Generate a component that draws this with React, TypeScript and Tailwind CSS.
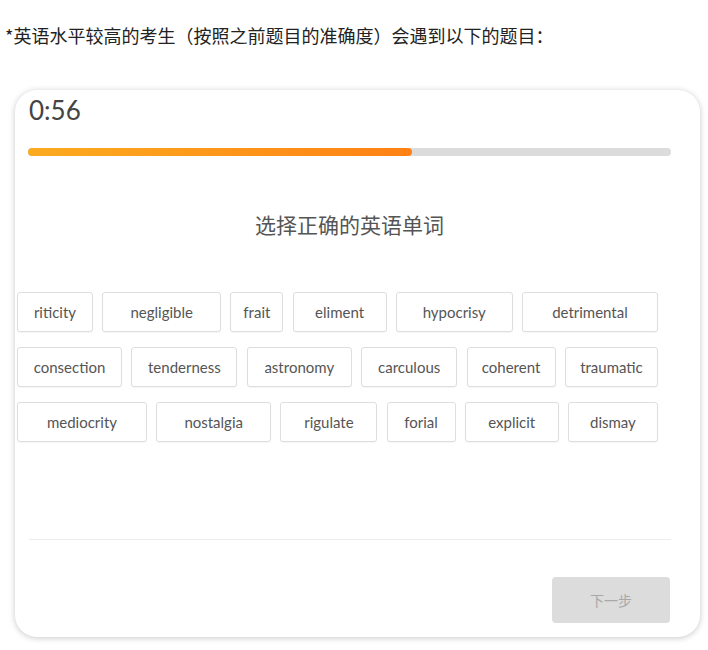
const rows: { word: string; w: string }[][] = [
  [
    { word: "riticity", w: "w-[76px]" },
    { word: "negligible", w: "w-[119px]" },
    { word: "frait", w: "w-[53px]" },
    { word: "eliment", w: "w-[94px]" },
    { word: "hypocrisy", w: "w-[117px]" },
    { word: "detrimental", w: "w-[136px]" },
  ],
  [
    { word: "consection", w: "w-[105px]" },
    { word: "tenderness", w: "w-[106px]" },
    { word: "astronomy", w: "w-[105px]" },
    { word: "carculous", w: "w-[96px]" },
    { word: "coherent", w: "w-[89px]" },
    { word: "traumatic", w: "w-[93px]" },
  ],
  [
    { word: "mediocrity", w: "w-[130px]" },
    { word: "nostalgia", w: "w-[115px]" },
    { word: "rigulate", w: "w-[97px]" },
    { word: "forial", w: "w-[69px]" },
    { word: "explicit", w: "w-[94px]" },
    { word: "dismay", w: "w-[90px]" },
  ],
]

function WordTag({ word, w }: { word: string; w: string }) {
  return (
    <button
      className={`${w} h-[40px] flex items-center justify-center rounded-[3px] border border-[#dedede] bg-white text-[15px] text-[#555] shadow-[0_1px_1px_rgba(0,0,0,0.04)]`}
    >
      {word}
    </button>
  )
}

export default function App() {
  return (
    <div className="w-[708px] h-[650px] bg-white overflow-hidden font-['Lato','Noto_Sans_CJK_SC',sans-serif]">
      <p className="pl-[5px] pt-[22px] text-[18px] leading-[26px] text-[#222] font-['Noto_Sans_CJK_SC',sans-serif]">
        *英语水平较高的考生（按照之前题目的准确度）会遇到以下的题目：
      </p>

      <div className="ml-[15px] mt-[42px] w-[685px] rounded-[22px] bg-white shadow-[0_1px_6px_rgba(0,0,0,0.22)] pt-[4px] pb-[14px]">
        {/* timer */}
        <div className="pl-[14px] text-[26px] leading-[32px] text-[#444]">0:56</div>

        {/* progress */}
        <div className="ml-[13px] mr-[29px] mt-[22px] h-2 rounded-full bg-[#dcdcdc]">
          <div className="h-2 w-[384px] rounded-full bg-gradient-to-r from-[#fbab1f] to-[#ff8115]" />
        </div>

        <h2 className="ml-[13px] mr-[29px] mt-[53px] text-center text-[21px] leading-[30px] text-[#555] font-['Noto_Sans_CJK_SC',sans-serif]">
          选择正确的英语单词
        </h2>

        <div className="ml-[2px] w-[641px] mt-[53px] flex flex-col gap-[15px]">
          {rows.map((row, i) => (
            <div key={i} className="flex justify-between">
              {row.map((t) => (
                <WordTag key={t.word} word={t.word} w={t.w} />
              ))}
            </div>
          ))}
        </div>

        <div className="ml-[14px] mr-[29px] mt-[97px] h-px bg-[#ececec]" />

        <div className="mr-[30px] mt-[37px] flex justify-end">
          <button className="w-[118px] h-[46px] rounded-[4px] bg-[#dcdcdc] text-[14px] text-[#a8a8a8] font-['Noto_Sans_CJK_SC',sans-serif]">
            下一步
          </button>
        </div>
      </div>
    </div>
  )
}
